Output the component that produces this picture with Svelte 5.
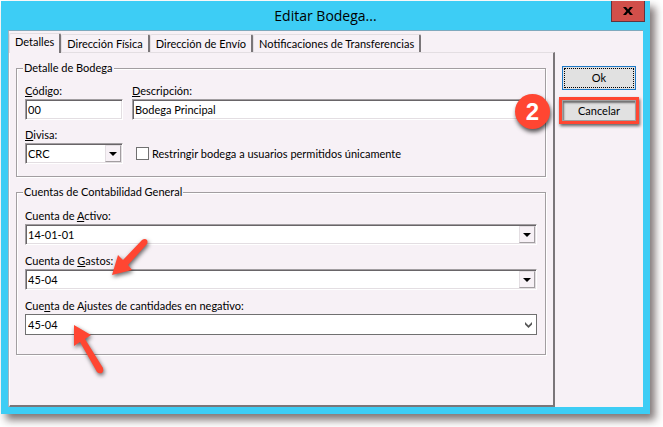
<script>
  const tabs = [
    "Detalles",
    "Dirección Física",
    "Dirección de Envío",
    "Notificaciones de Transferencias",
  ];

  let activeTab = "Detalles";
  let codigo = "00";
  let descripcion = "Bodega Principal";
  let divisa = "CRC";
  let restringir = false;
  let activo = "14-01-01";
  let gastos = "45-04";
  let ajustes = "45-04";
</script>

<div class="window">
  <header class="titlebar">
    <h1>Editar Bodega...</h1>
    <button class="close" type="button" aria-label="Cerrar">
      <svg viewBox="0 0 10 8" width="10" height="8">
        <path d="M0 0h3l2 2.4L7 0h3L6.6 4 10 8H7L5 5.6 3 8H0l3.4-4z" fill="#000" />
      </svg>
    </button>
  </header>

  <div class="content">
    <div class="main">
      <div class="tabs" role="tablist">
        {#each tabs as tab}
          <button
            class="tab"
            class:active={tab === activeTab}
            type="button"
            role="tab"
            aria-selected={tab === activeTab}
            on:click={() => (activeTab = tab)}>{tab}</button>
        {/each}
      </div>

      <div class="panel" role="tabpanel">
        <fieldset>
          <legend>Detalle de Bodega</legend>
          <div class="row">
            <div class="field code">
              <label for="codigo"><u>C</u>ódigo:</label>
              <input id="codigo" class="sunken" type="text" bind:value={codigo} />
            </div>
            <div class="field grow">
              <label for="descripcion"><u>D</u>escripción:</label>
              <input id="descripcion" class="sunken" type="text" bind:value={descripcion} />
            </div>
          </div>
          <div class="row">
            <div class="field code">
              <label for="divisa"><u>D</u>ivisa:</label>
              <div class="combo">
                <select id="divisa" class="sunken" bind:value={divisa}>
                  <option>CRC</option>
                </select>
                <span class="drop"></span>
              </div>
            </div>
            <label class="check">
              <input type="checkbox" bind:checked={restringir} />
              Restringir bodega a usuarios permitidos únicamente
            </label>
          </div>
        </fieldset>

        <fieldset class="accounts">
          <legend>Cuentas de Contabilidad General</legend>
          <div class="field">
            <label for="activo">Cuenta de <u>A</u>ctivo:</label>
            <div class="combo">
              <select id="activo" class="sunken" bind:value={activo}>
                <option>14-01-01</option>
              </select>
              <span class="drop"></span>
            </div>
          </div>
          <div class="field">
            <label for="gastos">Cuenta de <u>G</u>astos:</label>
            <div class="combo">
              <select id="gastos" class="sunken" bind:value={gastos}>
                <option>45-04</option>
              </select>
              <span class="drop"></span>
            </div>
            <svg class="arrow down" viewBox="0 0 42 44" width="42" height="44">
              <path d="M2 38 L8 18 L13 23 L32 3 Q35 1 37 3 Q38 5 37 7 L18 28 L22 33 Z" />
            </svg>
          </div>
          <div class="field">
            <label for="ajustes">Cue<u>n</u>ta de Ajustes de cantidades en negativo:</label>
            <div class="combo">
              <select id="ajustes" class="flat" bind:value={ajustes}>
                <option>45-04</option>
              </select>
              <svg class="chevron" viewBox="0 0 7 6" width="7" height="6">
                <path d="M0 0l3.500 3.500L7 0v2.500L3.500 6 0 2.500z" fill="#555" />
              </svg>
            </div>
            <svg class="arrow up" viewBox="0 0 36 56" width="36" height="56">
              <path d="M2 2 L19 12 L13 16 L31 45 Q32 48 30 50 Q27 51 25 49 L8 19 L2 23 Z" />
            </svg>
          </div>
        </fieldset>
      </div>
    </div>

    <div class="actions">
      <button class="btn ok" type="button">Ok</button>
      <div class="marked">
        <button class="btn" type="button">Cancelar</button>
        <span class="badge">2</span>
      </div>
    </div>
  </div>
</div>

<style>
  :global(body) {
    background: #fff;
    color: #000;
    font-family: "Lato", sans-serif;
    font-size: 11px;
    line-height: 14px;
  }

  .window {
    margin: 1px 13px 13px 1px;
    padding: 0 7px 7px;
    background: #3dcdf5;
    box-shadow: 5px 6px 8px rgba(60, 45, 45, 0.65);
  }

  .titlebar {
    position: relative;
    height: 29px;
  }

  h1 {
    margin: 0;
    font-family: "Open Sans", "Noto Sans", sans-serif;
    font-size: 14px;
    font-weight: 400;
    line-height: 29px;
    text-align: center;
  }

  .close {
    position: absolute;
    top: 0;
    right: -2px;
    display: grid;
    place-items: center;
    width: 34px;
    height: 21px;
    padding: 0;
    background: #d14f4a;
    border: 1px solid #5e3440;
    border-top: 0;
  }

  .content {
    display: flex;
    background: #f7f1f6;
    border-top: 1px solid #7fa9bd;
    border-left: 1px solid #a3b4c0;
  }

  .main {
    flex: 1;
    min-width: 0;
    display: flex;
    flex-direction: column;
  }

  .tabs {
    display: flex;
    align-items: flex-end;
    height: 20px;
    padding-top: 1px;
  }

  .tab {
    height: 18px;
    padding: 0 5px;
    background: #f7f1f6;
    border: 1px solid #e3dee2;
    border-bottom: 0;
    border-right: 2px solid #7a7679;
    border-radius: 2px 2px 0 0;
    color: inherit;
    font: inherit;
    white-space: nowrap;
  }

  .tab.active {
    position: relative;
    height: 20px;
    margin-bottom: -1px;
    padding-bottom: 3px;
  }

  .panel {
    display: flex;
    flex-direction: column;
    gap: 8px;
    padding: 8px 7px 50px 6px;
    border: 1px solid #e3dee2;
    border-left-color: #fff;
    border-right: 2px solid #7a7679;
    border-bottom: 2px solid #7a7679;
  }

  fieldset {
    display: flex;
    flex-direction: column;
    gap: 8px;
    min-width: 0;
    margin: 0;
    padding: 9px 8px 12px;
    border: 1px solid #a29ea1;
    box-shadow: 1px 1px 0 #fff, inset 1px 1px 0 #fff;
  }

  .accounts {
    gap: 9px;
    padding: 10px 8px 19px;
  }

  legend {
    padding: 0 1px;
    margin-left: -2px;
    background: #f7f1f6;
  }

  .row {
    display: flex;
    gap: 9px;
  }

  .field {
    position: relative;
    display: flex;
    flex-direction: column;
    gap: 1px;
  }

  .code {
    width: 98px;
  }

  .grow {
    flex: 1;
  }

  input[type="text"],
  select {
    box-sizing: border-box;
    width: 100%;
    height: 21px;
    margin: 0;
    padding: 0 2px;
    appearance: none;
    background: #fff;
    border-radius: 0;
    color: #000;
    font: inherit;
  }

  .sunken {
    border: 1px solid;
    border-color: #a29ea1 #fff #fff #a29ea1;
    box-shadow: inset 1px 1px 0 #696568, inset -1px -1px 0 #e3dee2;
  }

  .flat {
    border: 1px solid #707070;
  }

  .combo {
    position: relative;
  }

  .drop {
    position: absolute;
    top: 2px;
    right: 2px;
    width: 14px;
    height: 15px;
    background: #f7f1f6;
    border: 1px solid;
    border-color: #e3dee2 #a29ea1 #a29ea1 #e3dee2;
    pointer-events: none;
  }

  .drop::after {
    content: "";
    position: absolute;
    top: 6px;
    left: 3px;
    border: 4px solid transparent;
    border-top-color: #000;
    border-bottom: 0;
  }

  .chevron {
    position: absolute;
    top: 8px;
    right: 5px;
    pointer-events: none;
  }

  .check {
    display: flex;
    align-items: center;
    gap: 3px;
    margin: 15px 0 0 4px;
  }

  .check input {
    width: 13px;
    height: 13px;
    margin: 0;
    appearance: none;
    background: #fff;
    border: 1px solid #707070;
  }

  .check input:checked {
    background: #333;
  }

  .actions {
    display: flex;
    flex-direction: column;
    gap: 7px;
    padding: 35px 4px 0;
  }

  .btn {
    width: 74px;
    height: 24px;
    padding: 0;
    background: #e1e1e1;
    border: 1px solid #a0a0a0;
    color: inherit;
    font: inherit;
  }

  .ok {
    margin-left: 3px;
    border-color: #1d78c6;
    outline: 1px dotted #000;
    outline-offset: -3px;
  }

  .marked {
    position: relative;
    border: 3px solid #ff4632;
    box-shadow: 1px 2px 3px rgba(0, 0, 0, 0.6);
  }

  .marked .btn {
    display: block;
    height: 21px;
    box-shadow: inset 1px 2px 2px rgba(0, 0, 0, 0.5);
  }

  .badge {
    position: absolute;
    top: -6px;
    left: -47px;
    width: 35px;
    height: 35px;
    background: #ff4632;
    border-radius: 50%;
    box-shadow: 1px 3px 4px rgba(0, 0, 0, 0.65);
    color: #fff;
    font: bold 24px/35px "Liberation Sans", sans-serif;
    text-align: center;
  }

  .arrow {
    position: absolute;
    z-index: 1;
    fill: #ff4632;
    filter: drop-shadow(1px 2px 2px rgba(0, 0, 0, 0.6));
    pointer-events: none;
  }

  .down {
    top: -17px;
    left: 85px;
  }

  .up {
    top: 24px;
    left: 47px;
  }
</style>
